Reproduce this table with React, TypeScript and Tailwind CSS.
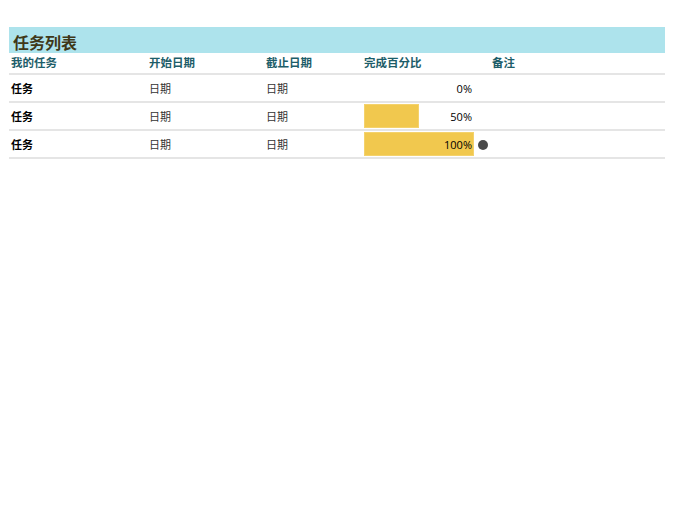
import React from 'react';

interface Task {
  name: string;
  start: string;
  end: string;
  pct: number;
  dot?: boolean;
}

const tasks: Task[] = [
  { name: '任务', start: '日期', end: '日期', pct: 0 },
  { name: '任务', start: '日期', end: '日期', pct: 50 },
  { name: '任务', start: '日期', end: '日期', pct: 100, dot: true },
];

const font = { fontFamily: '"Open Sans", "Noto Sans CJK SC", sans-serif' };
const cols = 'grid grid-cols-[138px_117px_98px_114px_14px_1fr]';

export default function App() {
  return (
    <div className="w-[675px] h-[520px] bg-white pt-[27px] px-[9px]" style={font}>
      <div className="w-[656px]">
        <div className="h-[26px] bg-[#ade3ec] flex items-end pl-[4px]">
          <span className="text-[16px] leading-[19px] font-bold text-[#3f3818]">任务列表</span>
        </div>
        <div className={`${cols} h-[22px] items-center border-b-2 border-[#e5e5e5] text-[11.5px] font-bold text-[#1d5d69]`}>
          <div className="pl-[2px]">我的任务</div>
          <div className="pl-[2px]">开始日期</div>
          <div className="pl-[2px]">截止日期</div>
          <div className="pl-[2px]">完成百分比</div>
          <div />
          <div className="pl-[2px]">备注</div>
        </div>
        {tasks.map((t, i) => (
          <div
            key={i}
            className={`${cols} h-[28px] items-center border-b-2 border-[#e5e5e5] text-[11px] text-[#333]`}
          >
            <div className="pl-[2px] pt-[2px] font-bold text-black">{t.name}</div>
            <div className="pl-[2px] pt-[2px]">{t.start}</div>
            <div className="pl-[2px] pt-[2px]">{t.end}</div>
            <div className="px-[2px] h-full py-[1px]">
              <div className="relative h-full">
                {t.pct > 0 && (
                  <div
                    className="absolute left-0 top-0 h-full bg-[#f1c84e] border border-[#f4d26c]"
                    style={{ width: `${t.pct}%` }}
                  />
                )}
                <div className="relative h-full flex items-center justify-end pr-[2px] pt-[2px] text-black">
                  {t.pct}%
                </div>
              </div>
            </div>
            <div className="flex items-center pt-[2px]">
              {t.dot && <div className="w-[10px] h-[10px] ml-[2px] rounded-full bg-[#4a4a4a]" />}
            </div>
            <div />
          </div>
        ))}
      </div>
    </div>
  );
}
